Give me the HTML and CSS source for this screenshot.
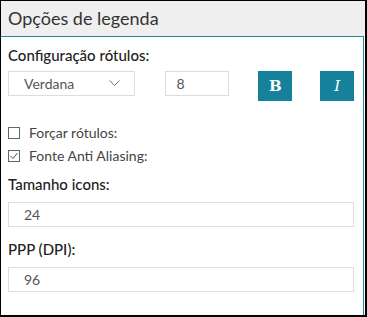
FILE: index.html
```html
<!DOCTYPE html>
<html lang="pt">
<head>
  <meta charset="UTF-8" />
  <title>Opções de legenda</title>
  <link rel="stylesheet" href="styles.css">
</head>
<body>
  <div class="window">
    <div class="header">Opções de legenda</div>

    <div class="panel">
      <div class="label">Configuração rótulos:</div>
      <div class="font-row">
        <div class="select">
          <span>Verdana</span>
          <svg class="chevron" width="11" height="7" viewBox="0 0 11 7">
            <path d="M0.5 0.5 L5.5 5.5 L10.5 0.5" fill="none" stroke="#777" stroke-width="1" />
          </svg>
        </div>
        <div class="input small">8</div>
        <div class="btn bold">B</div>
        <div class="btn italic">I</div>
      </div>

      <div class="checks">
        <div class="check">
          <span class="box"></span>
          <span>Forçar rótulos:</span>
        </div>
        <div class="check">
          <span class="box">
            <svg width="12" height="12" viewBox="0 0 12 12">
              <path d="M2.5 6 L5 8.5 L9.5 3" fill="none" stroke="#555" stroke-width="1" />
            </svg>
          </span>
          <span>Fonte Anti Aliasing:</span>
        </div>
      </div>

      <div class="label">Tamanho icons:</div>
      <div class="input wide">24</div>

      <div class="label">PPP (DPI):</div>
      <div class="input wide">96</div>
    </div>
  </div>
</body>
</html>
```

FILE: styles.css
```css
body {
  margin: 0;
  background: #fff;
  font-family: Lato, "Open Sans", sans-serif;
  color: #333;
}

.window {
  width: 367px;
  height: 317px;
  box-sizing: border-box;
  border: 1px solid #000;
  border-right-width: 2px;
  border-bottom-width: 2px;
  display: flex;
  flex-direction: column;
}

.header {
  height: 35px;
  background: #efefef;
  font-size: 18px;
  line-height: 34px;
  padding-left: 7px;
  color: #333;
}

.panel {
  flex: 1;
  border-top: 1px solid #1a8a9c;
  border-right: 1px solid #1a8a9c;
  margin-right: 1px;
  padding: 9px 9px 0 7px;
}

.label {
  font-size: 15px;
  line-height: 19px;
  color: #222;
  font-weight: 500;
}

.font-row {
  display: flex;
  align-items: flex-start;
  margin-top: 6px;
}

.select,
.input {
  box-sizing: border-box;
  height: 25px;
  border: 1px solid #ddd;
  font-size: 14px;
  line-height: 23px;
  color: #555;
  background: #fff;
}

.select {
  width: 127px;
  padding: 0 14px 0 15px;
  display: flex;
  align-items: center;
  justify-content: space-between;
}

.small {
  width: 65px;
  margin-left: 30px;
  padding-left: 11px;
}

.btn {
  width: 34px;
  height: 30px;
  background: #15819a;
  color: #fff;
  font-family: "DejaVu Serif", serif;
  font-size: 15px;
  line-height: 30px;
  text-align: center;
}

.bold {
  font-weight: bold;
  margin-left: 29px;
}

.italic {
  font-style: italic;
  margin-left: 28px;
}

.checks {
  margin-top: 23px;
  display: flex;
  flex-direction: column;
  gap: 6px;
}

.check {
  display: flex;
  align-items: center;
  font-size: 14px;
  line-height: 17px;
  color: #444;
}

.box {
  width: 12px;
  height: 12px;
  box-sizing: border-box;
  border: 1px solid #666;
  margin-right: 9px;
  display: flex;
}

.box svg {
  margin: -1px;
}

.checks + .label {
  margin-top: 11px;
}

.wide {
  width: 346px;
  margin-top: 8px;
  margin-bottom: 13px;
  padding-left: 15px;
}
```
